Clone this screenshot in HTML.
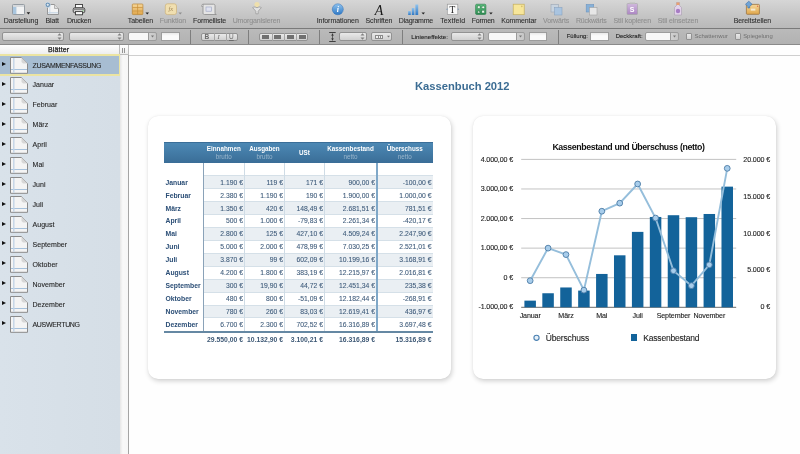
<!DOCTYPE html><html><head><meta charset="utf-8"><style>
*{margin:0;padding:0;box-sizing:border-box}
html,body{width:800px;height:454px;overflow:hidden;background:#fff;font-family:"Liberation Sans",sans-serif}
.abs{position:absolute}
#toolbar{position:absolute;left:0;top:0;width:800px;height:29px;background:linear-gradient(#d6d6d6,#c5c5c5 55%,#b9b9b9);border-bottom:1px solid #7a7a7a}
.tl{position:absolute;top:17px;font-size:7px;line-height:8px;color:#2e2e2e;white-space:nowrap;-webkit-text-stroke:0.08px #2e2e2e}
.tl.dis{color:#8e8e8e;-webkit-text-stroke:0.08px #8e8e8e}
#fmtbar{position:absolute;left:0;top:29px;width:800px;height:16px;background:linear-gradient(#bababa,#b2b2b2);border-bottom:1px solid #8a8a8a}
.fld{position:absolute;top:3px;height:9px;border:1px solid #929292;border-radius:2px;background:linear-gradient(#e9e9e9,#d0d0d0)}
.wfld{position:absolute;top:3px;height:9px;border:1px solid #9c9c9c;background:#f8f8f8}
.fl{position:absolute;top:3px;font-size:6.2px;line-height:9px;color:#2a2a2a;white-space:nowrap}
.fl.dis{color:#6a6a6a}
.sep{position:absolute;top:1px;width:1px;height:14px;background:#7e7e7e}
#side{position:absolute;left:0;top:55px;width:120px;height:399px;background:linear-gradient(90deg,#d9e2ea,#d5dee6)}
#sidehdr{position:absolute;left:0;top:45px;width:129px;height:10px;background:linear-gradient(#ffffff,#eeeeee);border-bottom:1px solid #bdbdbd}
#split{position:absolute;left:120px;top:55px;width:9px;height:399px;background:linear-gradient(90deg,#e6e6e6,#f8f8f8 35%,#f6f6f6);border-right:1px solid #a4a4a4}
#canvas{position:absolute;left:129px;top:45px;width:671px;height:409px;background:#fefefe}
.row{position:absolute;left:0;width:120px;height:20px;font-size:7px;color:#2a2a2a}
.row.sel{background:#a8bdd1;border-top:1px solid #f0e392;border-bottom:1px solid #f0e392;border-right:1px solid #f0e392}
.tri{position:absolute;left:1.8px;width:0;height:0;border-left:4.3px solid #111;border-top:2.9px solid transparent;border-bottom:2.9px solid transparent}
.card{position:absolute;background:#fff;border-radius:10px;box-shadow:1px 2px 5px rgba(0,0,0,0.19),0 0 1px rgba(0,0,0,0.09)}
.tt{position:absolute;font-size:6.8px;line-height:8px;white-space:nowrap}
</style></head><body><div id="root" style="position:absolute;left:0;top:0;width:800px;height:454px;will-change:transform">
<div id="toolbar"></div>
<div class="tl" style="left:3.8px;letter-spacing:-0.09px">Darstellung</div>
<div class="tl" style="left:45.6px;letter-spacing:-0.16px">Blatt</div>
<div class="tl" style="left:66.9px;letter-spacing:-0.28px">Drucken</div>
<div class="tl" style="left:127.8px;letter-spacing:-0.11px">Tabellen</div>
<div class="tl dis" style="left:159.8px;letter-spacing:-0.08px">Funktion</div>
<div class="tl" style="left:193.0px;letter-spacing:-0.11px">Formelliste</div>
<div class="tl dis" style="left:232.7px;letter-spacing:-0.14px">Umorganisieren</div>
<div class="tl" style="left:316.7px;letter-spacing:-0.06px">Informationen</div>
<div class="tl" style="left:365.5px;letter-spacing:-0.10px">Schriften</div>
<div class="tl" style="left:398.8px;letter-spacing:-0.22px">Diagramme</div>
<div class="tl" style="left:440.2px;letter-spacing:0.11px">Textfeld</div>
<div class="tl" style="left:471.7px;letter-spacing:-0.22px">Formen</div>
<div class="tl" style="left:501.2px;letter-spacing:-0.10px">Kommentar</div>
<div class="tl dis" style="left:543.0px;letter-spacing:-0.15px">Vorwärts</div>
<div class="tl dis" style="left:576.0px;letter-spacing:-0.25px">Rückwärts</div>
<div class="tl dis" style="left:613.5px;letter-spacing:-0.08px">Stil kopieren</div>
<div class="tl dis" style="left:657.7px;letter-spacing:-0.08px">Stil einsetzen</div>
<div class="tl" style="left:733.7px;letter-spacing:-0.09px">Bereitstellen</div>
<svg class="abs" style="left:0;top:0" width="800" height="29" viewBox="0 0 800 29">
<defs>
<linearGradient id="gBlue" x1="0" y1="0" x2="0" y2="1"><stop offset="0" stop-color="#8fc3ee"/><stop offset="1" stop-color="#2f78c4"/></linearGradient>
<linearGradient id="gOr" x1="0" y1="0" x2="0" y2="1"><stop offset="0" stop-color="#f6d79a"/><stop offset="1" stop-color="#e0a74c"/></linearGradient>
<linearGradient id="gGr" x1="0" y1="0" x2="0" y2="1"><stop offset="0" stop-color="#5cc17e"/><stop offset="1" stop-color="#2e8f55"/></linearGradient>
<linearGradient id="gPur" x1="0" y1="0" x2="0" y2="1"><stop offset="0" stop-color="#d1a9e6"/><stop offset="1" stop-color="#9a5cc0"/></linearGradient>
</defs>
<!-- Darstellung -->
<rect x="12.5" y="4.5" width="12" height="10" rx="0.8" fill="#f2f3f4" stroke="#8c949c" stroke-width="0.9"/>
<rect x="13" y="5" width="11" height="2" fill="#d6d9dc"/>
<rect x="13" y="7" width="3.2" height="7" fill="#a9c6df"/>
<line x1="16.4" y1="7" x2="16.4" y2="14" stroke="#c9d6e2" stroke-width="0.6"/>
<path d="M26.6 12.3h3.6l-1.8 2.1z" fill="#222"/>
<!-- Blatt -->
<path d="M47.5 4.5h7l4 4v6h-11z" fill="#f3f3f3" stroke="#8c8c8c" stroke-width="0.9"/>
<path d="M54.5 4.5v4h4" fill="#dedede" stroke="#9c9c9c" stroke-width="0.7"/>
<line x1="47.8" y1="12.8" x2="58.3" y2="12.8" stroke="#b0c7dd" stroke-width="0.8"/>
<line x1="49.8" y1="5" x2="49.8" y2="14.2" stroke="#c6d6e6" stroke-width="0.9"/>
<circle cx="47.8" cy="4.8" r="2.6" fill="#5482aa" stroke="#dfe8f0" stroke-width="0.7"/>
<path d="M46.4 4.8h2.8M47.8 3.4v2.8" stroke="#fff" stroke-width="0.8"/>
<!-- Drucken -->
<rect x="75.5" y="4.5" width="7" height="3.5" fill="#fafafa" stroke="#3a3a3a" stroke-width="0.9"/>
<rect x="73.2" y="7.8" width="11.6" height="5" rx="1.6" fill="#cfcfcf" stroke="#3a3a3a" stroke-width="0.9"/>
<rect x="73.8" y="8.4" width="10.4" height="1.6" fill="#8a8a8a"/>
<rect x="75.5" y="11.6" width="7" height="3.2" fill="#fafafa" stroke="#3a3a3a" stroke-width="0.9"/>
<circle cx="83" cy="10.8" r="0.5" fill="#4c4"/>
<!-- Tabellen -->
<rect x="132.3" y="4" width="10.6" height="10.6" rx="0.8" fill="url(#gOr)" stroke="#b98535" stroke-width="0.7"/>
<path d="M137.6 4.2v10.2M132.5 7.5h10.2M132.5 11h10.2" stroke="#c98f3a" stroke-width="0.7"/>
<path d="M145.5 12.5h3.5l-1.75 2z" fill="#222"/>
<!-- Funktion -->
<rect x="165.3" y="3.8" width="11.2" height="10.8" rx="2.2" fill="#f0dfb0" stroke="#cdb27a" stroke-width="0.7"/>
<text x="170.9" y="11.2" font-size="6.5" font-style="italic" fill="#a4895a" text-anchor="middle" font-family="Liberation Serif">fx</text>
<path d="M178.5 12.5h3.5l-1.75 2z" fill="#8e8e8e"/>
<!-- Formelliste -->
<path d="M203 4.2h10.5c1 0 1.5 0.6 1.5 1.5v7.5c0 0.8 0.6 1.3 1.3 1.3h-11.8c-0.8 0-1.5-0.6-1.5-1.4z" fill="#e4e4e4" stroke="#8a8a8a" stroke-width="0.8"/>
<path d="M203 4.2c-0.9 0-1.3 0.6-1.3 1.3v1h1.3" fill="#d0d0d0" stroke="#8a8a8a" stroke-width="0.6"/>
<rect x="206" y="7" width="5.5" height="4.2" fill="#dfe2ee" stroke="#9aa2c2" stroke-width="0.6"/>
<!-- Umorganisieren -->
<circle cx="257" cy="4.6" r="2.6" fill="#f3e2a6" opacity="0.85"/>
<path d="M252.6 7.6c1.5-0.8 3-0.8 4.4 0.2c1.4-1 2.9-1 4.4-0.2l-3.2 3.6v2.6h-2.4v-2.6z" fill="#e2e2e2" stroke="#9c9c9c" stroke-width="0.8"/>
<!-- Informationen -->
<circle cx="337.8" cy="9.3" r="5.5" fill="url(#gBlue)" stroke="#2c6fb8" stroke-width="0.5"/>
<text x="337.8" y="12.3" font-size="8" font-style="italic" font-weight="bold" fill="#fff" text-anchor="middle" font-family="Liberation Serif">i</text>
<!-- Schriften -->
<text x="379" y="15" font-size="14" font-style="italic" fill="#1a1a1a" text-anchor="middle" font-family="Liberation Serif">A</text>
<!-- Diagramme -->
<rect x="408.2" y="11" width="2.6" height="4" fill="url(#gBlue)"/>
<rect x="411.8" y="8" width="2.6" height="7" fill="url(#gBlue)"/>
<rect x="415.4" y="4.5" width="2.8" height="10.5" fill="url(#gBlue)"/>
<path d="M421.5 12.5h3.5l-1.75 2z" fill="#222"/>
<!-- Textfeld -->
<rect x="447.3" y="4.2" width="10.5" height="10.3" fill="#f8f8f8" stroke="#9a9a9a" stroke-width="0.7"/>
<text x="452.5" y="12.8" font-size="9.5" fill="#1e1e1e" text-anchor="middle" font-family="Liberation Serif">T</text>
<path d="M446.2 9.3l1.2-1v2zM459 9.3l-1.2-1v2z" fill="#6f8fb0"/>
<!-- Formen -->
<rect x="475.6" y="4.2" width="10.3" height="10.3" rx="1.2" fill="url(#gGr)" stroke="#2a7a48" stroke-width="0.6"/>
<rect x="477.3" y="5.9" width="2.8" height="2.8" fill="#eaf7ea" stroke="#1f6b3a" stroke-width="0.5"/>
<circle cx="483.2" cy="7.3" r="1.4" fill="#eaf7ea" stroke="#1f6b3a" stroke-width="0.5"/>
<path d="M478.7 10.1l1.5 2.9h-3z" fill="#eaf7ea" stroke="#1f6b3a" stroke-width="0.5"/>
<rect x="481.8" y="10.2" width="2.8" height="2.8" fill="#eaf7ea" stroke="#1f6b3a" stroke-width="0.5"/>
<path d="M489.2 12.5h3.5l-1.75 2z" fill="#222"/>
<!-- Kommentar -->
<rect x="513.2" y="4.2" width="11" height="10.5" fill="#f7e69a" stroke="#c4ad5c" stroke-width="0.7"/>
<circle cx="521.8" cy="6.3" r="0.9" fill="#d6c070"/>
<!-- Vorwaerts -->
<rect x="551" y="4.5" width="7.5" height="7.5" fill="#c8d3de" stroke="#9aa6b4" stroke-width="0.6"/>
<rect x="554.5" y="7.5" width="7.5" height="7.5" fill="#a9c4e0" stroke="#8aa3c0" stroke-width="0.6"/>
<!-- Rueckwaerts -->
<rect x="586.2" y="4.5" width="7.5" height="7.5" fill="#86b0d8" stroke="#6f96c0" stroke-width="0.6"/>
<rect x="589.5" y="7.5" width="7.5" height="7.5" fill="#e6e6e6" stroke="#a0a0a0" stroke-width="0.6"/>
<!-- Stil kopieren -->
<rect x="627" y="3.5" width="10.5" height="11" rx="0.8" fill="url(#gPur)" stroke="#8a8a8a" stroke-width="0.6" opacity="0.6"/>
<rect x="629.5" y="2.5" width="5.5" height="1.6" fill="#bdbdbd"/>
<text x="632.2" y="12" font-size="7" fill="#fff" text-anchor="middle" font-weight="bold">S</text>
<!-- Stil einsetzen -->
<path d="M676.5 2.5h3v3l2 2v7.5h-7v-7.5l2-2z" fill="#e3d3ea" stroke="#a89cb0" stroke-width="0.6"/>
<rect x="676.5" y="2.5" width="3" height="2.5" fill="#e8a070"/>
<circle cx="678" cy="11" r="2.2" fill="#a77cc4"/>
<!-- Bereitstellen -->
<rect x="746.4" y="4.4" width="13" height="9.9" rx="0.8" fill="url(#gOr)" stroke="#9a7440" stroke-width="0.8"/>
<rect x="750.8" y="8.6" width="4.6" height="2" fill="#f4ead2"/>
<circle cx="757.6" cy="6.2" r="0.7" fill="#e06a50"/>
<path d="M748.8 1.2l3.3 3.1-2.4 2.1v1.6h-1.8v-1.6l-2.4-2.1z" fill="#6fa3d6" stroke="#3a6fa8" stroke-width="0.6"/>
</svg>
<div id="fmtbar"></div><div class="abs" style="left:0;top:29px;width:800px;height:16px">
<div class="fld" style="left:2.3px;width:61.7px"></div>
<svg class="abs" style="left:57.0px;top:3px" width="5" height="9"><path d="M0.5 3.6L2.5 1.2L4.5 3.6z M0.5 5.4L2.5 7.8L4.5 5.4z" fill="#808080"/></svg>
<div class="fld" style="left:68.7px;width:55.0px"></div>
<svg class="abs" style="left:116.7px;top:3px" width="5" height="9"><path d="M0.5 3.6L2.5 1.2L4.5 3.6z M0.5 5.4L2.5 7.8L4.5 5.4z" fill="#808080"/></svg>
<div class="wfld" style="left:128.0px;width:29.0px;border-radius:2px;background:linear-gradient(90deg,#f7f7f7 0,#f7f7f7 19.0px,#d2d2d2 19.0px,#c6c6c6)"></div>
<div class="abs" style="left:147.5px;top:3px;width:1px;height:9px;background:#9a9a9a"></div>
<svg class="abs" style="left:150.0px;top:3px" width="5" height="9"><path d="M1 3.6L4 3.6L2.5 5.6z" fill="#777"/></svg>
<div class="wfld" style="left:161.0px;width:19.0px;background:linear-gradient(#e9e9e9,#fafafa 40%,#fafafa)"></div>
<div class="sep" style="left:190.0px"></div>
<div class="fld" style="left:200.7px;width:37.5px;top:3.5px;height:8px"></div>
<div class="abs" style="left:213.7px;top:3.5px;width:1px;height:8px;background:#a4a4a4"></div>
<div class="abs" style="left:225.7px;top:3.5px;width:1px;height:8px;background:#a4a4a4"></div>
<div class="fl" style="left:204.5px;top:3px;font-weight:bold;color:#6a6a6a;font-size:6.5px">B</div>
<div class="fl" style="left:217.5px;top:3px;font-style:italic;color:#6a6a6a;font-size:6.5px;font-family:Liberation Serif">I</div>
<div class="fl" style="left:229px;top:3px;color:#6a6a6a;font-size:6.5px;text-decoration:underline">U</div>
<div class="sep" style="left:248.0px"></div>
<div class="fld" style="left:258.7px;width:49.5px;top:3.5px;height:8px"></div>
<div class="abs" style="left:271.5px;top:3.5px;width:1px;height:8px;background:#a4a4a4"></div>
<div class="abs" style="left:283.8px;top:3.5px;width:1px;height:8px;background:#a4a4a4"></div>
<div class="abs" style="left:296.2px;top:3.5px;width:1px;height:8px;background:#a4a4a4"></div>
<div class="abs" style="left:261.6px;top:5.5px;width:7px;height:4px;background:repeating-linear-gradient(#707070 0,#707070 0.8px,#a8a8a8 0.8px,#a8a8a8 1.1px)"></div>
<div class="abs" style="left:274.2px;top:5.5px;width:7px;height:4px;background:repeating-linear-gradient(#707070 0,#707070 0.8px,#a8a8a8 0.8px,#a8a8a8 1.1px)"></div>
<div class="abs" style="left:286.5px;top:5.5px;width:7px;height:4px;background:repeating-linear-gradient(#707070 0,#707070 0.8px,#a8a8a8 0.8px,#a8a8a8 1.1px)"></div>
<div class="abs" style="left:299.0px;top:5.5px;width:7px;height:4px;background:repeating-linear-gradient(#707070 0,#707070 0.8px,#a8a8a8 0.8px,#a8a8a8 1.1px)"></div>
<div class="sep" style="left:319.0px"></div>
<svg class="abs" style="left:328px;top:2px" width="9" height="12"><path d="M1.2 1.5h6.5M1.2 10.5h6.5" stroke="#333" stroke-width="0.9"/><path d="M4.5 2.5v7" stroke="#333" stroke-width="0.7"/><path d="M3 4.5l1.5-1.8 1.5 1.8zM3 7.5l1.5 1.8 1.5-1.8z" fill="#333"/></svg>
<div class="fld" style="left:338.7px;width:28.5px"></div>
<svg class="abs" style="left:360.2px;top:3px" width="5" height="9"><path d="M0.5 3.6L2.5 1.2L4.5 3.6z M0.5 5.4L2.5 7.8L4.5 5.4z" fill="#808080"/></svg>
<div class="fld" style="left:371.2px;width:21px"></div>
<div class="abs" style="left:374.5px;top:5.5px;width:8px;height:4.5px;border:0.8px solid #8a8a8a;background:repeating-linear-gradient(90deg,#f0f0f0 0,#f0f0f0 1.8px,#8a8a8a 1.8px,#8a8a8a 2.5px)"></div>
<svg class="abs" style="left:385.5px;top:3px" width="5" height="9"><path d="M1 3.8L4 3.8L2.5 5.6z" fill="#777"/></svg>
<div class="sep" style="left:402.0px"></div>
<div class="fl" style="left:411.3px;letter-spacing:0;font-size:6.2px;color:#222;-webkit-text-stroke:0.1px #222">Linieneffekte:</div>
<div class="fld" style="left:450.7px;width:33.0px"></div>
<svg class="abs" style="left:476.7px;top:3px" width="5" height="9"><path d="M0.5 3.6L2.5 1.2L4.5 3.6z M0.5 5.4L2.5 7.8L4.5 5.4z" fill="#808080"/></svg>
<div class="wfld" style="left:488.2px;width:36.8px;border-radius:2px;background:linear-gradient(90deg,#f7f7f7 0,#f7f7f7 27.5px,#d2d2d2 27.5px,#c6c6c6)"></div>
<div class="abs" style="left:516.2px;top:3px;width:1px;height:9px;background:#9a9a9a"></div>
<svg class="abs" style="left:518.4px;top:3px" width="5" height="9"><path d="M1 3.6L4 3.6L2.5 5.6z" fill="#777"/></svg>
<div class="wfld" style="left:529.2px;width:18.0px;background:linear-gradient(#e9e9e9,#fafafa 40%,#fafafa)"></div>
<div class="sep" style="left:557.8px"></div>
<div class="fl" style="left:566.7px;font-size:6px;color:#222;letter-spacing:0;-webkit-text-stroke:0.1px #222">Füllung:</div>
<div class="wfld" style="left:590.2px;width:18.5px;background:linear-gradient(#e9e9e9,#fafafa 40%,#fafafa)"></div>
<div class="fl" style="left:615.7px;font-size:6px;color:#222;letter-spacing:0;-webkit-text-stroke:0.1px #222">Deckkraft:</div>
<div class="wfld" style="left:645.0px;width:34.3px;border-radius:2px;background:linear-gradient(90deg,#f7f7f7 0,#f7f7f7 24.2px,#d2d2d2 24.2px,#c6c6c6)"></div>
<div class="abs" style="left:669.7px;top:3px;width:1px;height:9px;background:#9a9a9a"></div>
<svg class="abs" style="left:672.2px;top:3px" width="5" height="9"><path d="M1 3.6L4 3.6L2.5 5.6z" fill="#777"/></svg>
<div class="fld" style="left:686.2px;width:5.6px;top:4.3px;height:6.4px;border-radius:1px"></div>
<div class="fl dis" style="left:694.5px;font-size:6px;letter-spacing:0;color:#707070">Schattenwur</div>
<div class="fld" style="left:734.7px;width:6px;top:4.3px;height:6.4px;border-radius:1px"></div>
<div class="fl dis" style="left:743.2px;font-size:5.9px;letter-spacing:0;color:#707070">Spiegelung</div></div>
<div id="canvas"></div>
<div class="abs" style="left:129px;top:54.5px;width:671px;height:1px;background:#cfcfcf"></div>
<div id="side"></div>
<div id="split"></div>
<div id="sidehdr"></div>
<div class="abs" style="left:119px;top:45px;width:1px;height:10px;background:#bdbdbd"></div>
<div class="abs" style="left:128px;top:45px;width:1px;height:10px;background:#bdbdbd"></div>
<div class="abs" style="left:122.2px;top:47.5px;width:1px;height:5px;background:#959595"></div>
<div class="abs" style="left:124.2px;top:47.5px;width:1px;height:5px;background:#959595"></div>
<div class="abs" style="left:48px;top:46px;font-size:7px;line-height:8px;color:#1e1e1e;-webkit-text-stroke:0.25px #1e1e1e;letter-spacing:0.15px">Blätter</div>
<div class="abs" style="left:0;top:54px;width:120px;height:22px;background:#a7bdd2;border:2px solid #ebe4a2;border-left:none;border-right-width:1.5px"></div>
<div class="tri" style="top:62.1px"></div>
<svg class="abs" style="left:9px;top:56.0px" width="20" height="18" viewBox="0 0 20 18"><path d="M1.5 1.5h11l6 6v9.8h-17z" fill="#f4f4f4" stroke="#8a8a8a"/><path d="M12.5 1.5l6 6h-4.5l-1.5-1.5z" fill="#d6d6d6"/><line x1="2" y1="13.5" x2="18" y2="13.5" stroke="#a6c1dc"/><line x1="4.8" y1="2" x2="4.8" y2="16.8" stroke="#c3d4e6" stroke-width="1.4"/></svg>
<div class="abs" style="left:32.5px;top:61.5px;font-size:7px;line-height:8px;color:#262626;-webkit-text-stroke:0.1px #262626;white-space:nowrap;letter-spacing:-0.32px">ZUSAMMENFASSUNG</div>
<div class="tri" style="top:82.0px"></div>
<svg class="abs" style="left:9px;top:75.9px" width="20" height="18" viewBox="0 0 20 18"><path d="M1.5 1.5h11l6 6v9.8h-17z" fill="#f4f4f4" stroke="#8a8a8a"/><path d="M12.5 1.5l6 6h-4.5l-1.5-1.5z" fill="#d6d6d6"/><line x1="2" y1="13.5" x2="18" y2="13.5" stroke="#a6c1dc"/><line x1="4.8" y1="2" x2="4.8" y2="16.8" stroke="#c3d4e6" stroke-width="1.4"/></svg>
<div class="abs" style="left:32.5px;top:81.4px;font-size:7px;line-height:8px;color:#262626;-webkit-text-stroke:0.1px #262626;white-space:nowrap;letter-spacing:0.05px">Januar</div>
<div class="tri" style="top:101.9px"></div>
<svg class="abs" style="left:9px;top:95.8px" width="20" height="18" viewBox="0 0 20 18"><path d="M1.5 1.5h11l6 6v9.8h-17z" fill="#f4f4f4" stroke="#8a8a8a"/><path d="M12.5 1.5l6 6h-4.5l-1.5-1.5z" fill="#d6d6d6"/><line x1="2" y1="13.5" x2="18" y2="13.5" stroke="#a6c1dc"/><line x1="4.8" y1="2" x2="4.8" y2="16.8" stroke="#c3d4e6" stroke-width="1.4"/></svg>
<div class="abs" style="left:32.5px;top:101.3px;font-size:7px;line-height:8px;color:#262626;-webkit-text-stroke:0.1px #262626;white-space:nowrap;letter-spacing:0.05px">Februar</div>
<div class="tri" style="top:121.9px"></div>
<svg class="abs" style="left:9px;top:115.8px" width="20" height="18" viewBox="0 0 20 18"><path d="M1.5 1.5h11l6 6v9.8h-17z" fill="#f4f4f4" stroke="#8a8a8a"/><path d="M12.5 1.5l6 6h-4.5l-1.5-1.5z" fill="#d6d6d6"/><line x1="2" y1="13.5" x2="18" y2="13.5" stroke="#a6c1dc"/><line x1="4.8" y1="2" x2="4.8" y2="16.8" stroke="#c3d4e6" stroke-width="1.4"/></svg>
<div class="abs" style="left:32.5px;top:121.3px;font-size:7px;line-height:8px;color:#262626;-webkit-text-stroke:0.1px #262626;white-space:nowrap;letter-spacing:0.05px">März</div>
<div class="tri" style="top:141.8px"></div>
<svg class="abs" style="left:9px;top:135.7px" width="20" height="18" viewBox="0 0 20 18"><path d="M1.5 1.5h11l6 6v9.8h-17z" fill="#f4f4f4" stroke="#8a8a8a"/><path d="M12.5 1.5l6 6h-4.5l-1.5-1.5z" fill="#d6d6d6"/><line x1="2" y1="13.5" x2="18" y2="13.5" stroke="#a6c1dc"/><line x1="4.8" y1="2" x2="4.8" y2="16.8" stroke="#c3d4e6" stroke-width="1.4"/></svg>
<div class="abs" style="left:32.5px;top:141.2px;font-size:7px;line-height:8px;color:#262626;-webkit-text-stroke:0.1px #262626;white-space:nowrap;letter-spacing:0.05px">April</div>
<div class="tri" style="top:161.7px"></div>
<svg class="abs" style="left:9px;top:155.6px" width="20" height="18" viewBox="0 0 20 18"><path d="M1.5 1.5h11l6 6v9.8h-17z" fill="#f4f4f4" stroke="#8a8a8a"/><path d="M12.5 1.5l6 6h-4.5l-1.5-1.5z" fill="#d6d6d6"/><line x1="2" y1="13.5" x2="18" y2="13.5" stroke="#a6c1dc"/><line x1="4.8" y1="2" x2="4.8" y2="16.8" stroke="#c3d4e6" stroke-width="1.4"/></svg>
<div class="abs" style="left:32.5px;top:161.1px;font-size:7px;line-height:8px;color:#262626;-webkit-text-stroke:0.1px #262626;white-space:nowrap;letter-spacing:0.05px">Mai</div>
<div class="tri" style="top:181.6px"></div>
<svg class="abs" style="left:9px;top:175.5px" width="20" height="18" viewBox="0 0 20 18"><path d="M1.5 1.5h11l6 6v9.8h-17z" fill="#f4f4f4" stroke="#8a8a8a"/><path d="M12.5 1.5l6 6h-4.5l-1.5-1.5z" fill="#d6d6d6"/><line x1="2" y1="13.5" x2="18" y2="13.5" stroke="#a6c1dc"/><line x1="4.8" y1="2" x2="4.8" y2="16.8" stroke="#c3d4e6" stroke-width="1.4"/></svg>
<div class="abs" style="left:32.5px;top:181.0px;font-size:7px;line-height:8px;color:#262626;-webkit-text-stroke:0.1px #262626;white-space:nowrap;letter-spacing:0.05px">Juni</div>
<div class="tri" style="top:201.5px"></div>
<svg class="abs" style="left:9px;top:195.4px" width="20" height="18" viewBox="0 0 20 18"><path d="M1.5 1.5h11l6 6v9.8h-17z" fill="#f4f4f4" stroke="#8a8a8a"/><path d="M12.5 1.5l6 6h-4.5l-1.5-1.5z" fill="#d6d6d6"/><line x1="2" y1="13.5" x2="18" y2="13.5" stroke="#a6c1dc"/><line x1="4.8" y1="2" x2="4.8" y2="16.8" stroke="#c3d4e6" stroke-width="1.4"/></svg>
<div class="abs" style="left:32.5px;top:200.9px;font-size:7px;line-height:8px;color:#262626;-webkit-text-stroke:0.1px #262626;white-space:nowrap;letter-spacing:0.05px">Juli</div>
<div class="tri" style="top:221.5px"></div>
<svg class="abs" style="left:9px;top:215.4px" width="20" height="18" viewBox="0 0 20 18"><path d="M1.5 1.5h11l6 6v9.8h-17z" fill="#f4f4f4" stroke="#8a8a8a"/><path d="M12.5 1.5l6 6h-4.5l-1.5-1.5z" fill="#d6d6d6"/><line x1="2" y1="13.5" x2="18" y2="13.5" stroke="#a6c1dc"/><line x1="4.8" y1="2" x2="4.8" y2="16.8" stroke="#c3d4e6" stroke-width="1.4"/></svg>
<div class="abs" style="left:32.5px;top:220.9px;font-size:7px;line-height:8px;color:#262626;-webkit-text-stroke:0.1px #262626;white-space:nowrap;letter-spacing:0.05px">August</div>
<div class="tri" style="top:241.4px"></div>
<svg class="abs" style="left:9px;top:235.3px" width="20" height="18" viewBox="0 0 20 18"><path d="M1.5 1.5h11l6 6v9.8h-17z" fill="#f4f4f4" stroke="#8a8a8a"/><path d="M12.5 1.5l6 6h-4.5l-1.5-1.5z" fill="#d6d6d6"/><line x1="2" y1="13.5" x2="18" y2="13.5" stroke="#a6c1dc"/><line x1="4.8" y1="2" x2="4.8" y2="16.8" stroke="#c3d4e6" stroke-width="1.4"/></svg>
<div class="abs" style="left:32.5px;top:240.8px;font-size:7px;line-height:8px;color:#262626;-webkit-text-stroke:0.1px #262626;white-space:nowrap;letter-spacing:0.05px">September</div>
<div class="tri" style="top:261.3px"></div>
<svg class="abs" style="left:9px;top:255.2px" width="20" height="18" viewBox="0 0 20 18"><path d="M1.5 1.5h11l6 6v9.8h-17z" fill="#f4f4f4" stroke="#8a8a8a"/><path d="M12.5 1.5l6 6h-4.5l-1.5-1.5z" fill="#d6d6d6"/><line x1="2" y1="13.5" x2="18" y2="13.5" stroke="#a6c1dc"/><line x1="4.8" y1="2" x2="4.8" y2="16.8" stroke="#c3d4e6" stroke-width="1.4"/></svg>
<div class="abs" style="left:32.5px;top:260.7px;font-size:7px;line-height:8px;color:#262626;-webkit-text-stroke:0.1px #262626;white-space:nowrap;letter-spacing:0.05px">Oktober</div>
<div class="tri" style="top:281.2px"></div>
<svg class="abs" style="left:9px;top:275.1px" width="20" height="18" viewBox="0 0 20 18"><path d="M1.5 1.5h11l6 6v9.8h-17z" fill="#f4f4f4" stroke="#8a8a8a"/><path d="M12.5 1.5l6 6h-4.5l-1.5-1.5z" fill="#d6d6d6"/><line x1="2" y1="13.5" x2="18" y2="13.5" stroke="#a6c1dc"/><line x1="4.8" y1="2" x2="4.8" y2="16.8" stroke="#c3d4e6" stroke-width="1.4"/></svg>
<div class="abs" style="left:32.5px;top:280.6px;font-size:7px;line-height:8px;color:#262626;-webkit-text-stroke:0.1px #262626;white-space:nowrap;letter-spacing:0.05px">November</div>
<div class="tri" style="top:301.1px"></div>
<svg class="abs" style="left:9px;top:295.0px" width="20" height="18" viewBox="0 0 20 18"><path d="M1.5 1.5h11l6 6v9.8h-17z" fill="#f4f4f4" stroke="#8a8a8a"/><path d="M12.5 1.5l6 6h-4.5l-1.5-1.5z" fill="#d6d6d6"/><line x1="2" y1="13.5" x2="18" y2="13.5" stroke="#a6c1dc"/><line x1="4.8" y1="2" x2="4.8" y2="16.8" stroke="#c3d4e6" stroke-width="1.4"/></svg>
<div class="abs" style="left:32.5px;top:300.5px;font-size:7px;line-height:8px;color:#262626;-webkit-text-stroke:0.1px #262626;white-space:nowrap;letter-spacing:0.05px">Dezember</div>
<div class="tri" style="top:321.1px"></div>
<svg class="abs" style="left:9px;top:315.0px" width="20" height="18" viewBox="0 0 20 18"><path d="M1.5 1.5h11l6 6v9.8h-17z" fill="#f4f4f4" stroke="#8a8a8a"/><path d="M12.5 1.5l6 6h-4.5l-1.5-1.5z" fill="#d6d6d6"/><line x1="2" y1="13.5" x2="18" y2="13.5" stroke="#a6c1dc"/><line x1="4.8" y1="2" x2="4.8" y2="16.8" stroke="#c3d4e6" stroke-width="1.4"/></svg>
<div class="abs" style="left:32.5px;top:320.5px;font-size:7px;line-height:8px;color:#262626;-webkit-text-stroke:0.1px #262626;white-space:nowrap;letter-spacing:-0.32px">AUSWERTUNG</div>
<div class="abs" style="left:415px;top:79.5px;font-size:11.2px;font-weight:bold;color:#3b6c93;white-space:nowrap">Kassenbuch 2012</div>
<div class="card" style="left:148px;top:116px;width:302.5px;height:263px"></div>
<div class="card" style="left:473.3px;top:116.3px;width:303px;height:263px"></div>
<div class="abs" style="left:164px;top:141.5px;width:269px;height:21px;background:linear-gradient(#4c88b4,#437ba6 50%,#3a6d97);border-top:1px solid #3a6e98"></div>
<div class="tt" style="left:223.8px;top:144.5px;width:60px;margin-left:-30px;text-align:center;font-weight:bold;color:#fff;font-size:6.3px">Einnahmen</div>
<div class="tt" style="left:223.8px;top:152.6px;width:60px;margin-left:-30px;text-align:center;color:#9ab6cc;font-size:6.3px">brutto</div>
<div class="tt" style="left:264.5px;top:144.5px;width:60px;margin-left:-30px;text-align:center;font-weight:bold;color:#fff;font-size:6.3px">Ausgaben</div>
<div class="tt" style="left:264.5px;top:152.6px;width:60px;margin-left:-30px;text-align:center;color:#9ab6cc;font-size:6.3px">brutto</div>
<div class="tt" style="left:304.5px;top:148.5px;width:60px;margin-left:-30px;text-align:center;font-weight:bold;color:#fff;font-size:6.3px">USt</div>
<div class="tt" style="left:350.5px;top:144.5px;width:60px;margin-left:-30px;text-align:center;font-weight:bold;color:#fff;font-size:6.3px">Kassenbestand</div>
<div class="tt" style="left:350.5px;top:152.6px;width:60px;margin-left:-30px;text-align:center;color:#9ab6cc;font-size:6.3px">netto</div>
<div class="tt" style="left:404.8px;top:144.5px;width:60px;margin-left:-30px;text-align:center;font-weight:bold;color:#fff;font-size:6.3px">Überschuss</div>
<div class="tt" style="left:404.8px;top:152.6px;width:60px;margin-left:-30px;text-align:center;color:#9ab6cc;font-size:6.3px">netto</div>
<div class="abs" style="left:203px;top:175.5px;width:230px;height:12.95px;background:#eaeff3"></div>
<div class="abs" style="left:203px;top:201.4px;width:230px;height:12.95px;background:#eaeff3"></div>
<div class="abs" style="left:203px;top:227.3px;width:230px;height:12.95px;background:#eaeff3"></div>
<div class="abs" style="left:203px;top:253.2px;width:230px;height:12.95px;background:#eaeff3"></div>
<div class="abs" style="left:203px;top:279.1px;width:230px;height:12.95px;background:#eaeff3"></div>
<div class="abs" style="left:203px;top:305.0px;width:230px;height:12.95px;background:#eaeff3"></div>
<div class="abs" style="left:203px;top:175.0px;width:230px;height:1px;background:#d5e0e8"></div>
<div class="abs" style="left:203px;top:187.9px;width:230px;height:1px;background:#d5e0e8"></div>
<div class="abs" style="left:203px;top:200.9px;width:230px;height:1px;background:#d5e0e8"></div>
<div class="abs" style="left:203px;top:213.8px;width:230px;height:1px;background:#d5e0e8"></div>
<div class="abs" style="left:203px;top:226.8px;width:230px;height:1px;background:#d5e0e8"></div>
<div class="abs" style="left:203px;top:239.8px;width:230px;height:1px;background:#d5e0e8"></div>
<div class="abs" style="left:203px;top:252.7px;width:230px;height:1px;background:#d5e0e8"></div>
<div class="abs" style="left:203px;top:265.6px;width:230px;height:1px;background:#d5e0e8"></div>
<div class="abs" style="left:203px;top:278.6px;width:230px;height:1px;background:#d5e0e8"></div>
<div class="abs" style="left:203px;top:291.6px;width:230px;height:1px;background:#d5e0e8"></div>
<div class="abs" style="left:203px;top:304.5px;width:230px;height:1px;background:#d5e0e8"></div>
<div class="abs" style="left:203px;top:317.4px;width:230px;height:1px;background:#d5e0e8"></div>
<div class="abs" style="left:202.5px;top:162.5px;width:1px;height:169px;background:#8aa2b8"></div>
<div class="abs" style="left:244.0px;top:162.5px;width:1px;height:169px;background:#cfdce6"></div>
<div class="abs" style="left:284.0px;top:162.5px;width:1px;height:169px;background:#cfdce6"></div>
<div class="abs" style="left:324.0px;top:162.5px;width:1px;height:169px;background:#cfdce6"></div>
<div class="abs" style="left:375.5px;top:162.5px;width:2px;height:169px;background:#80a8c8"></div>
<div class="abs" style="left:164px;top:331.1px;width:269px;height:2px;background:#6588a3"></div>
<div class="tt" style="left:165.5px;top:178.6px;font-weight:bold;color:#2b4e76">Januar</div>
<div class="tt" style="left:243.0px;top:178.6px;width:60px;margin-left:-60px;text-align:right;color:#3d5a7a;-webkit-text-stroke:0.08px #3d5a7a">1.190 €</div>
<div class="tt" style="left:283.0px;top:178.6px;width:60px;margin-left:-60px;text-align:right;color:#3d5a7a;-webkit-text-stroke:0.08px #3d5a7a">119 €</div>
<div class="tt" style="left:323.0px;top:178.6px;width:60px;margin-left:-60px;text-align:right;color:#3d5a7a;-webkit-text-stroke:0.08px #3d5a7a">171 €</div>
<div class="tt" style="left:375.0px;top:178.6px;width:60px;margin-left:-60px;text-align:right;color:#3d5a7a;-webkit-text-stroke:0.08px #3d5a7a">900,00 €</div>
<div class="tt" style="left:431.5px;top:178.6px;width:60px;margin-left:-60px;text-align:right;color:#3d5a7a;-webkit-text-stroke:0.08px #3d5a7a">-100,00 €</div>
<div class="tt" style="left:165.5px;top:191.5px;font-weight:bold;color:#2b4e76">Februar</div>
<div class="tt" style="left:243.0px;top:191.5px;width:60px;margin-left:-60px;text-align:right;color:#3d5a7a;-webkit-text-stroke:0.08px #3d5a7a">2.380 €</div>
<div class="tt" style="left:283.0px;top:191.5px;width:60px;margin-left:-60px;text-align:right;color:#3d5a7a;-webkit-text-stroke:0.08px #3d5a7a">1.190 €</div>
<div class="tt" style="left:323.0px;top:191.5px;width:60px;margin-left:-60px;text-align:right;color:#3d5a7a;-webkit-text-stroke:0.08px #3d5a7a">190 €</div>
<div class="tt" style="left:375.0px;top:191.5px;width:60px;margin-left:-60px;text-align:right;color:#3d5a7a;-webkit-text-stroke:0.08px #3d5a7a">1.900,00 €</div>
<div class="tt" style="left:431.5px;top:191.5px;width:60px;margin-left:-60px;text-align:right;color:#3d5a7a;-webkit-text-stroke:0.08px #3d5a7a">1.000,00 €</div>
<div class="tt" style="left:165.5px;top:204.5px;font-weight:bold;color:#2b4e76">März</div>
<div class="tt" style="left:243.0px;top:204.5px;width:60px;margin-left:-60px;text-align:right;color:#3d5a7a;-webkit-text-stroke:0.08px #3d5a7a">1.350 €</div>
<div class="tt" style="left:283.0px;top:204.5px;width:60px;margin-left:-60px;text-align:right;color:#3d5a7a;-webkit-text-stroke:0.08px #3d5a7a">420 €</div>
<div class="tt" style="left:323.0px;top:204.5px;width:60px;margin-left:-60px;text-align:right;color:#3d5a7a;-webkit-text-stroke:0.08px #3d5a7a">148,49 €</div>
<div class="tt" style="left:375.0px;top:204.5px;width:60px;margin-left:-60px;text-align:right;color:#3d5a7a;-webkit-text-stroke:0.08px #3d5a7a">2.681,51 €</div>
<div class="tt" style="left:431.5px;top:204.5px;width:60px;margin-left:-60px;text-align:right;color:#3d5a7a;-webkit-text-stroke:0.08px #3d5a7a">781,51 €</div>
<div class="tt" style="left:165.5px;top:217.4px;font-weight:bold;color:#2b4e76">April</div>
<div class="tt" style="left:243.0px;top:217.4px;width:60px;margin-left:-60px;text-align:right;color:#3d5a7a;-webkit-text-stroke:0.08px #3d5a7a">500 €</div>
<div class="tt" style="left:283.0px;top:217.4px;width:60px;margin-left:-60px;text-align:right;color:#3d5a7a;-webkit-text-stroke:0.08px #3d5a7a">1.000 €</div>
<div class="tt" style="left:323.0px;top:217.4px;width:60px;margin-left:-60px;text-align:right;color:#3d5a7a;-webkit-text-stroke:0.08px #3d5a7a">-79,83 €</div>
<div class="tt" style="left:375.0px;top:217.4px;width:60px;margin-left:-60px;text-align:right;color:#3d5a7a;-webkit-text-stroke:0.08px #3d5a7a">2.261,34 €</div>
<div class="tt" style="left:431.5px;top:217.4px;width:60px;margin-left:-60px;text-align:right;color:#3d5a7a;-webkit-text-stroke:0.08px #3d5a7a">-420,17 €</div>
<div class="tt" style="left:165.5px;top:230.4px;font-weight:bold;color:#2b4e76">Mai</div>
<div class="tt" style="left:243.0px;top:230.4px;width:60px;margin-left:-60px;text-align:right;color:#3d5a7a;-webkit-text-stroke:0.08px #3d5a7a">2.800 €</div>
<div class="tt" style="left:283.0px;top:230.4px;width:60px;margin-left:-60px;text-align:right;color:#3d5a7a;-webkit-text-stroke:0.08px #3d5a7a">125 €</div>
<div class="tt" style="left:323.0px;top:230.4px;width:60px;margin-left:-60px;text-align:right;color:#3d5a7a;-webkit-text-stroke:0.08px #3d5a7a">427,10 €</div>
<div class="tt" style="left:375.0px;top:230.4px;width:60px;margin-left:-60px;text-align:right;color:#3d5a7a;-webkit-text-stroke:0.08px #3d5a7a">4.509,24 €</div>
<div class="tt" style="left:431.5px;top:230.4px;width:60px;margin-left:-60px;text-align:right;color:#3d5a7a;-webkit-text-stroke:0.08px #3d5a7a">2.247,90 €</div>
<div class="tt" style="left:165.5px;top:243.3px;font-weight:bold;color:#2b4e76">Juni</div>
<div class="tt" style="left:243.0px;top:243.3px;width:60px;margin-left:-60px;text-align:right;color:#3d5a7a;-webkit-text-stroke:0.08px #3d5a7a">5.000 €</div>
<div class="tt" style="left:283.0px;top:243.3px;width:60px;margin-left:-60px;text-align:right;color:#3d5a7a;-webkit-text-stroke:0.08px #3d5a7a">2.000 €</div>
<div class="tt" style="left:323.0px;top:243.3px;width:60px;margin-left:-60px;text-align:right;color:#3d5a7a;-webkit-text-stroke:0.08px #3d5a7a">478,99 €</div>
<div class="tt" style="left:375.0px;top:243.3px;width:60px;margin-left:-60px;text-align:right;color:#3d5a7a;-webkit-text-stroke:0.08px #3d5a7a">7.030,25 €</div>
<div class="tt" style="left:431.5px;top:243.3px;width:60px;margin-left:-60px;text-align:right;color:#3d5a7a;-webkit-text-stroke:0.08px #3d5a7a">2.521,01 €</div>
<div class="tt" style="left:165.5px;top:256.3px;font-weight:bold;color:#2b4e76">Juli</div>
<div class="tt" style="left:243.0px;top:256.3px;width:60px;margin-left:-60px;text-align:right;color:#3d5a7a;-webkit-text-stroke:0.08px #3d5a7a">3.870 €</div>
<div class="tt" style="left:283.0px;top:256.3px;width:60px;margin-left:-60px;text-align:right;color:#3d5a7a;-webkit-text-stroke:0.08px #3d5a7a">99 €</div>
<div class="tt" style="left:323.0px;top:256.3px;width:60px;margin-left:-60px;text-align:right;color:#3d5a7a;-webkit-text-stroke:0.08px #3d5a7a">602,09 €</div>
<div class="tt" style="left:375.0px;top:256.3px;width:60px;margin-left:-60px;text-align:right;color:#3d5a7a;-webkit-text-stroke:0.08px #3d5a7a">10.199,16 €</div>
<div class="tt" style="left:431.5px;top:256.3px;width:60px;margin-left:-60px;text-align:right;color:#3d5a7a;-webkit-text-stroke:0.08px #3d5a7a">3.168,91 €</div>
<div class="tt" style="left:165.5px;top:269.2px;font-weight:bold;color:#2b4e76">August</div>
<div class="tt" style="left:243.0px;top:269.2px;width:60px;margin-left:-60px;text-align:right;color:#3d5a7a;-webkit-text-stroke:0.08px #3d5a7a">4.200 €</div>
<div class="tt" style="left:283.0px;top:269.2px;width:60px;margin-left:-60px;text-align:right;color:#3d5a7a;-webkit-text-stroke:0.08px #3d5a7a">1.800 €</div>
<div class="tt" style="left:323.0px;top:269.2px;width:60px;margin-left:-60px;text-align:right;color:#3d5a7a;-webkit-text-stroke:0.08px #3d5a7a">383,19 €</div>
<div class="tt" style="left:375.0px;top:269.2px;width:60px;margin-left:-60px;text-align:right;color:#3d5a7a;-webkit-text-stroke:0.08px #3d5a7a">12.215,97 €</div>
<div class="tt" style="left:431.5px;top:269.2px;width:60px;margin-left:-60px;text-align:right;color:#3d5a7a;-webkit-text-stroke:0.08px #3d5a7a">2.016,81 €</div>
<div class="tt" style="left:165.5px;top:282.2px;font-weight:bold;color:#2b4e76">September</div>
<div class="tt" style="left:243.0px;top:282.2px;width:60px;margin-left:-60px;text-align:right;color:#3d5a7a;-webkit-text-stroke:0.08px #3d5a7a">300 €</div>
<div class="tt" style="left:283.0px;top:282.2px;width:60px;margin-left:-60px;text-align:right;color:#3d5a7a;-webkit-text-stroke:0.08px #3d5a7a">19,90 €</div>
<div class="tt" style="left:323.0px;top:282.2px;width:60px;margin-left:-60px;text-align:right;color:#3d5a7a;-webkit-text-stroke:0.08px #3d5a7a">44,72 €</div>
<div class="tt" style="left:375.0px;top:282.2px;width:60px;margin-left:-60px;text-align:right;color:#3d5a7a;-webkit-text-stroke:0.08px #3d5a7a">12.451,34 €</div>
<div class="tt" style="left:431.5px;top:282.2px;width:60px;margin-left:-60px;text-align:right;color:#3d5a7a;-webkit-text-stroke:0.08px #3d5a7a">235,38 €</div>
<div class="tt" style="left:165.5px;top:295.2px;font-weight:bold;color:#2b4e76">Oktober</div>
<div class="tt" style="left:243.0px;top:295.2px;width:60px;margin-left:-60px;text-align:right;color:#3d5a7a;-webkit-text-stroke:0.08px #3d5a7a">480 €</div>
<div class="tt" style="left:283.0px;top:295.2px;width:60px;margin-left:-60px;text-align:right;color:#3d5a7a;-webkit-text-stroke:0.08px #3d5a7a">800 €</div>
<div class="tt" style="left:323.0px;top:295.2px;width:60px;margin-left:-60px;text-align:right;color:#3d5a7a;-webkit-text-stroke:0.08px #3d5a7a">-51,09 €</div>
<div class="tt" style="left:375.0px;top:295.2px;width:60px;margin-left:-60px;text-align:right;color:#3d5a7a;-webkit-text-stroke:0.08px #3d5a7a">12.182,44 €</div>
<div class="tt" style="left:431.5px;top:295.2px;width:60px;margin-left:-60px;text-align:right;color:#3d5a7a;-webkit-text-stroke:0.08px #3d5a7a">-268,91 €</div>
<div class="tt" style="left:165.5px;top:308.1px;font-weight:bold;color:#2b4e76">November</div>
<div class="tt" style="left:243.0px;top:308.1px;width:60px;margin-left:-60px;text-align:right;color:#3d5a7a;-webkit-text-stroke:0.08px #3d5a7a">780 €</div>
<div class="tt" style="left:283.0px;top:308.1px;width:60px;margin-left:-60px;text-align:right;color:#3d5a7a;-webkit-text-stroke:0.08px #3d5a7a">260 €</div>
<div class="tt" style="left:323.0px;top:308.1px;width:60px;margin-left:-60px;text-align:right;color:#3d5a7a;-webkit-text-stroke:0.08px #3d5a7a">83,03 €</div>
<div class="tt" style="left:375.0px;top:308.1px;width:60px;margin-left:-60px;text-align:right;color:#3d5a7a;-webkit-text-stroke:0.08px #3d5a7a">12.619,41 €</div>
<div class="tt" style="left:431.5px;top:308.1px;width:60px;margin-left:-60px;text-align:right;color:#3d5a7a;-webkit-text-stroke:0.08px #3d5a7a">436,97 €</div>
<div class="tt" style="left:165.5px;top:321.1px;font-weight:bold;color:#2b4e76">Dezember</div>
<div class="tt" style="left:243.0px;top:321.1px;width:60px;margin-left:-60px;text-align:right;color:#3d5a7a;-webkit-text-stroke:0.08px #3d5a7a">6.700 €</div>
<div class="tt" style="left:283.0px;top:321.1px;width:60px;margin-left:-60px;text-align:right;color:#3d5a7a;-webkit-text-stroke:0.08px #3d5a7a">2.300 €</div>
<div class="tt" style="left:323.0px;top:321.1px;width:60px;margin-left:-60px;text-align:right;color:#3d5a7a;-webkit-text-stroke:0.08px #3d5a7a">702,52 €</div>
<div class="tt" style="left:375.0px;top:321.1px;width:60px;margin-left:-60px;text-align:right;color:#3d5a7a;-webkit-text-stroke:0.08px #3d5a7a">16.316,89 €</div>
<div class="tt" style="left:431.5px;top:321.1px;width:60px;margin-left:-60px;text-align:right;color:#3d5a7a;-webkit-text-stroke:0.08px #3d5a7a">3.697,48 €</div>
<div class="tt" style="left:243.0px;top:335.5px;width:60px;margin-left:-60px;text-align:right;color:#3d5875;font-weight:bold">29.550,00 €</div>
<div class="tt" style="left:283.0px;top:335.5px;width:60px;margin-left:-60px;text-align:right;color:#3d5875;font-weight:bold">10.132,90 €</div>
<div class="tt" style="left:323.0px;top:335.5px;width:60px;margin-left:-60px;text-align:right;color:#3d5875;font-weight:bold">3.100,21 €</div>
<div class="tt" style="left:375.0px;top:335.5px;width:60px;margin-left:-60px;text-align:right;color:#3d5875;font-weight:bold">16.316,89 €</div>
<div class="tt" style="left:431.5px;top:335.5px;width:60px;margin-left:-60px;text-align:right;color:#3d5875;font-weight:bold">15.316,89 €</div>
<svg class="abs" style="left:0;top:0" width="800" height="454" viewBox="0 0 800 454"><line x1="521.2" y1="159.40" x2="736.2" y2="159.40" stroke="#b2b2b2" stroke-width="0.8"/><line x1="521.2" y1="188.98" x2="736.2" y2="188.98" stroke="#b2b2b2" stroke-width="0.8"/><line x1="521.2" y1="218.56" x2="736.2" y2="218.56" stroke="#b2b2b2" stroke-width="0.8"/><line x1="521.2" y1="248.14" x2="736.2" y2="248.14" stroke="#b2b2b2" stroke-width="0.8"/><line x1="521.2" y1="277.72" x2="736.2" y2="277.72" stroke="#b2b2b2" stroke-width="0.8"/><line x1="521.2" y1="307.30" x2="736.2" y2="307.30" stroke="#6a6a6a" stroke-width="1"/><rect x="524.41" y="300.64" width="11.50" height="6.66" fill="#13639a"/><rect x="542.33" y="293.25" width="11.50" height="14.05" fill="#13639a"/><rect x="560.24" y="287.47" width="11.50" height="19.83" fill="#13639a"/><rect x="578.16" y="290.58" width="11.50" height="16.72" fill="#13639a"/><rect x="596.08" y="273.95" width="11.50" height="33.35" fill="#13639a"/><rect x="613.99" y="255.31" width="11.50" height="51.99" fill="#13639a"/><rect x="631.91" y="231.88" width="11.50" height="75.42" fill="#13639a"/><rect x="649.83" y="216.96" width="11.50" height="90.34" fill="#13639a"/><rect x="667.74" y="215.22" width="11.50" height="92.08" fill="#13639a"/><rect x="685.66" y="217.21" width="11.50" height="90.09" fill="#13639a"/><rect x="703.58" y="213.98" width="11.50" height="93.32" fill="#13639a"/><rect x="721.49" y="186.64" width="11.50" height="120.66" fill="#13639a"/><polyline points="530.16,280.68 548.08,248.14 565.99,254.60 583.91,290.15 601.83,211.23 619.74,203.15 637.66,183.98 655.58,218.06 673.49,270.76 691.41,285.67 709.33,264.79 727.24,168.35" fill="none" stroke="#95bedb" stroke-width="1.9"/><circle cx="530.16" cy="280.68" r="2.9" fill="#a8cdeb" stroke="#4c7ca6" stroke-width="0.9"/><circle cx="548.08" cy="248.14" r="2.9" fill="#a8cdeb" stroke="#4c7ca6" stroke-width="0.9"/><circle cx="565.99" cy="254.60" r="2.9" fill="#a8cdeb" stroke="#4c7ca6" stroke-width="0.9"/><circle cx="583.91" cy="290.15" r="2.9" fill="#a8cdeb" stroke="#4c7ca6" stroke-width="0.9"/><circle cx="601.83" cy="211.23" r="2.9" fill="#a8cdeb" stroke="#4c7ca6" stroke-width="0.9"/><circle cx="619.74" cy="203.15" r="2.9" fill="#a8cdeb" stroke="#4c7ca6" stroke-width="0.9"/><circle cx="637.66" cy="183.98" r="2.9" fill="#a8cdeb" stroke="#4c7ca6" stroke-width="0.9"/><circle cx="655.58" cy="218.06" r="2.9" fill="#a8cdeb" stroke="#4c7ca6" stroke-width="0.9"/><circle cx="673.49" cy="270.76" r="2.9" fill="#a8cdeb" stroke="#4c7ca6" stroke-width="0.9"/><circle cx="691.41" cy="285.67" r="2.9" fill="#a8cdeb" stroke="#4c7ca6" stroke-width="0.9"/><circle cx="709.33" cy="264.79" r="2.9" fill="#a8cdeb" stroke="#4c7ca6" stroke-width="0.9"/><circle cx="727.24" cy="168.35" r="2.9" fill="#a8cdeb" stroke="#4c7ca6" stroke-width="0.9"/></svg>
<div class="tt" style="left:513px;top:155.5px;width:60px;margin-left:-60px;text-align:right;color:#1e1e1e;font-size:7.1px;letter-spacing:-0.12px;-webkit-text-stroke:0.12px #1e1e1e">4.000,00 €</div>
<div class="tt" style="left:513px;top:185.1px;width:60px;margin-left:-60px;text-align:right;color:#1e1e1e;font-size:7.1px;letter-spacing:-0.12px;-webkit-text-stroke:0.12px #1e1e1e">3.000,00 €</div>
<div class="tt" style="left:513px;top:214.7px;width:60px;margin-left:-60px;text-align:right;color:#1e1e1e;font-size:7.1px;letter-spacing:-0.12px;-webkit-text-stroke:0.12px #1e1e1e">2.000,00 €</div>
<div class="tt" style="left:513px;top:244.2px;width:60px;margin-left:-60px;text-align:right;color:#1e1e1e;font-size:7.1px;letter-spacing:-0.12px;-webkit-text-stroke:0.12px #1e1e1e">1.000,00 €</div>
<div class="tt" style="left:513px;top:273.8px;width:60px;margin-left:-60px;text-align:right;color:#1e1e1e;font-size:7.1px;letter-spacing:-0.12px;-webkit-text-stroke:0.12px #1e1e1e">0 €</div>
<div class="tt" style="left:513px;top:303.4px;width:60px;margin-left:-60px;text-align:right;color:#1e1e1e;font-size:7.1px;letter-spacing:-0.12px;-webkit-text-stroke:0.12px #1e1e1e">-1.000,00 €</div>
<div class="tt" style="left:770px;top:155.5px;width:60px;margin-left:-60px;text-align:right;color:#1e1e1e;font-size:7.1px;letter-spacing:-0.12px;-webkit-text-stroke:0.12px #1e1e1e">20.000 €</div>
<div class="tt" style="left:770px;top:192.5px;width:60px;margin-left:-60px;text-align:right;color:#1e1e1e;font-size:7.1px;letter-spacing:-0.12px;-webkit-text-stroke:0.12px #1e1e1e">15.000 €</div>
<div class="tt" style="left:770px;top:229.5px;width:60px;margin-left:-60px;text-align:right;color:#1e1e1e;font-size:7.1px;letter-spacing:-0.12px;-webkit-text-stroke:0.12px #1e1e1e">10.000 €</div>
<div class="tt" style="left:770px;top:266.4px;width:60px;margin-left:-60px;text-align:right;color:#1e1e1e;font-size:7.1px;letter-spacing:-0.12px;-webkit-text-stroke:0.12px #1e1e1e">5.000 €</div>
<div class="tt" style="left:770px;top:303.4px;width:60px;margin-left:-60px;text-align:right;color:#1e1e1e;font-size:7.1px;letter-spacing:-0.12px;-webkit-text-stroke:0.12px #1e1e1e">0 €</div>
<div class="tt" style="left:530.2px;top:312px;width:60px;margin-left:-30px;text-align:center;color:#1e1e1e;font-size:7.1px;letter-spacing:-0.12px;-webkit-text-stroke:0.12px #1e1e1e">Januar</div>
<div class="tt" style="left:566.0px;top:312px;width:60px;margin-left:-30px;text-align:center;color:#1e1e1e;font-size:7.1px;letter-spacing:-0.12px;-webkit-text-stroke:0.12px #1e1e1e">März</div>
<div class="tt" style="left:601.8px;top:312px;width:60px;margin-left:-30px;text-align:center;color:#1e1e1e;font-size:7.1px;letter-spacing:-0.12px;-webkit-text-stroke:0.12px #1e1e1e">Mai</div>
<div class="tt" style="left:637.7px;top:312px;width:60px;margin-left:-30px;text-align:center;color:#1e1e1e;font-size:7.1px;letter-spacing:-0.12px;-webkit-text-stroke:0.12px #1e1e1e">Juli</div>
<div class="tt" style="left:673.5px;top:312px;width:60px;margin-left:-30px;text-align:center;color:#1e1e1e;font-size:7.1px;letter-spacing:-0.12px;-webkit-text-stroke:0.12px #1e1e1e">September</div>
<div class="tt" style="left:709.3px;top:312px;width:60px;margin-left:-30px;text-align:center;color:#1e1e1e;font-size:7.1px;letter-spacing:-0.12px;-webkit-text-stroke:0.12px #1e1e1e">November</div>
<div class="abs" style="left:552.4px;top:142.6px;font-size:8.8px;letter-spacing:-0.39px;line-height:9px;font-weight:bold;color:#111;white-space:nowrap">Kassenbestand und Überschuss (netto)</div>
<svg class="abs" style="left:530px;top:331px" width="14" height="14"><circle cx="6.5" cy="6.8" r="2.6" fill="#e6f0f8" stroke="#4a80b2" stroke-width="1.1"/></svg>
<div class="abs" style="left:545.7px;top:334.2px;font-size:8.5px;letter-spacing:-0.16px;line-height:9px;color:#1e1e1e;white-space:nowrap;-webkit-text-stroke:0.1px #1e1e1e">Überschuss</div>
<div class="abs" style="left:630.5px;top:334.3px;width:6.8px;height:7px;background:#13639a"></div>
<div class="abs" style="left:643.3px;top:334.2px;font-size:8.5px;letter-spacing:-0.2px;line-height:9px;color:#1e1e1e;white-space:nowrap;-webkit-text-stroke:0.1px #1e1e1e">Kassenbestand</div>
</div></body></html>
